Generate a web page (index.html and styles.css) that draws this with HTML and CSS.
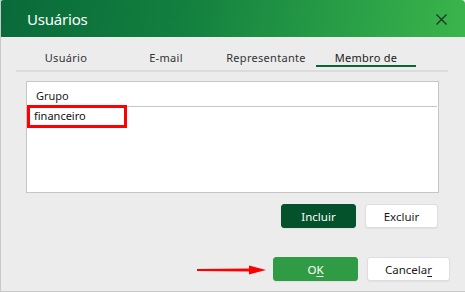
FILE: index.html
```html
<!DOCTYPE html>
<html>
  <head>
    <link rel="stylesheet" href="styles.css">
  </head>
  <body>
    <div class="dialog">
      <header class="titlebar">
        <span class="title">Usuários</span>
        <button class="close" aria-label="Fechar">
          <svg width="11" height="11" viewBox="0 0 11 11">
            <path d="M0.5 0.5 L10.5 10.5 M10.5 0.5 L0.5 10.5" stroke="#1c3326" stroke-width="1.3" fill="none" />
          </svg>
        </button>
      </header>
      <div class="content">
        <nav class="tabs">
          <span class="tab">Usuário</span>
          <span class="tab">E-mail</span>
          <span class="tab">Representante</span>
          <span class="tab active">Membro de</span>
        </nav>
        <div class="list">
          <div class="list-head">Grupo</div>
          <div class="list-row"><span class="cell marked">financeiro</span></div>
        </div>
        <div class="actions">
          <button class="btn btn-dark">Incluir</button>
          <button class="btn">Excluir</button>
        </div>
        <div class="footer">
          <svg class="arrow" width="69" height="10" viewBox="0 0 69 10">
            <path d="M0 4 L53 3.6 L53 6.4 L0 6 Z" fill="#ff0000" />
            <path d="M52 0.5 L69 5 L52 9.5 Z" fill="#ff0000" />
          </svg>
          <button class="btn btn-green">O<u>K</u></button>
          <button class="btn btn-cancel">Cancela<u>r</u></button>
        </div>
      </div>
    </div>
  </body>
</html>
```

FILE: styles.css
```css
body {
  margin: 0;
  font-family: "Noto Sans", "Open Sans", sans-serif;
  background: #ececec;
}
.dialog {
  width: 465px;
  height: 292px;
  box-sizing: border-box;
  border-left: 1px solid #c9c9c9;
  border-bottom: 1px solid #c9c9c9;
  background: #ececec;
  display: flex;
  flex-direction: column;
  overflow: hidden;
}
.titlebar {
  height: 37px;
  display: flex;
  align-items: center;
  justify-content: space-between;
  padding: 0 18px 0 27px;
  background: linear-gradient(100deg, #086a39 0%, #13803f 40%, #2a9f47 75%, #3ab64b 100%);
  border-radius: 4px 4px 0 0;
  margin-left: -1px;
}
.title {
  color: #ffffff;
  font-size: 15px;
  letter-spacing: -0.2px;
}
.close {
  background: none;
  border: none;
  padding: 0;
  width: 11px;
  height: 11px;
  display: flex;
  margin-top: 1px;
}
.content {
  display: flex;
  flex-direction: column;
}
.tabs {
  display: flex;
  margin: 9px 17px 0 15px;
  padding-bottom: 3px;
  border-bottom: 2px solid #dcdcdc;
}
.tab {
  width: 100px;
  text-align: center;
  font-size: 11px;
  color: #333333;
  line-height: 14px;
  padding-top: 5px;
  border-bottom: 2px solid transparent;
  letter-spacing: 0.3px;
}
.tab.active {
  color: #1a1a1a;
  border-bottom-color: #0b6534;
}
.list {
  margin: 9px 26px 0 25px;
  height: 110px;
  background: #ffffff;
  border: 1px solid #c6c6c6;
  display: flex;
  flex-direction: column;
}
.list-head {
  height: 24px;
  line-height: 27px;
  padding-left: 9px;
  font-size: 11px;
  color: #1a1a1a;
  border-bottom: 1px solid #c6c6c6;
  margin-right: 1px;
}
.list-row {
  display: flex;
}
.cell {
  font-size: 11px;
  color: #111111;
}
.cell.marked {
  width: 100px;
  height: 23px;
  box-sizing: border-box;
  border: 3px solid #ff0000;
  margin-top: -2px;
  padding-left: 4px;
  line-height: 16px;
}
.actions {
  display: flex;
  justify-content: flex-end;
  gap: 9px;
  margin: 11px 27px 0 0;
}
.btn {
  height: 24px;
  box-sizing: border-box;
  border: 1px solid #dedede;
  border-radius: 3px;
  background: #ffffff;
  font-family: "Noto Sans", "Open Sans", sans-serif;
  font-size: 11.5px;
  color: #1a1a1a;
  padding: 0;
  width: 73px;
  box-shadow: 0 1px 1px rgba(0, 0, 0, 0.05);
}
.btn u {
  text-underline-offset: 2px;
}
.btn-dark {
  width: 75px;
  background: #03522c;
  border-color: #03522c;
  color: #ffffff;
}
.btn-green {
  width: 85px;
  background: #2f9c45;
  border-color: #2f9c45;
  color: #ffffff;
}
.btn-cancel {
  width: 83px;
}
.footer {
  display: flex;
  justify-content: flex-end;
  align-items: center;
  gap: 9px;
  margin: 29px 15px 0 0;
}
.arrow {
  margin-right: -2px;
  margin-top: 1px;
}
```
